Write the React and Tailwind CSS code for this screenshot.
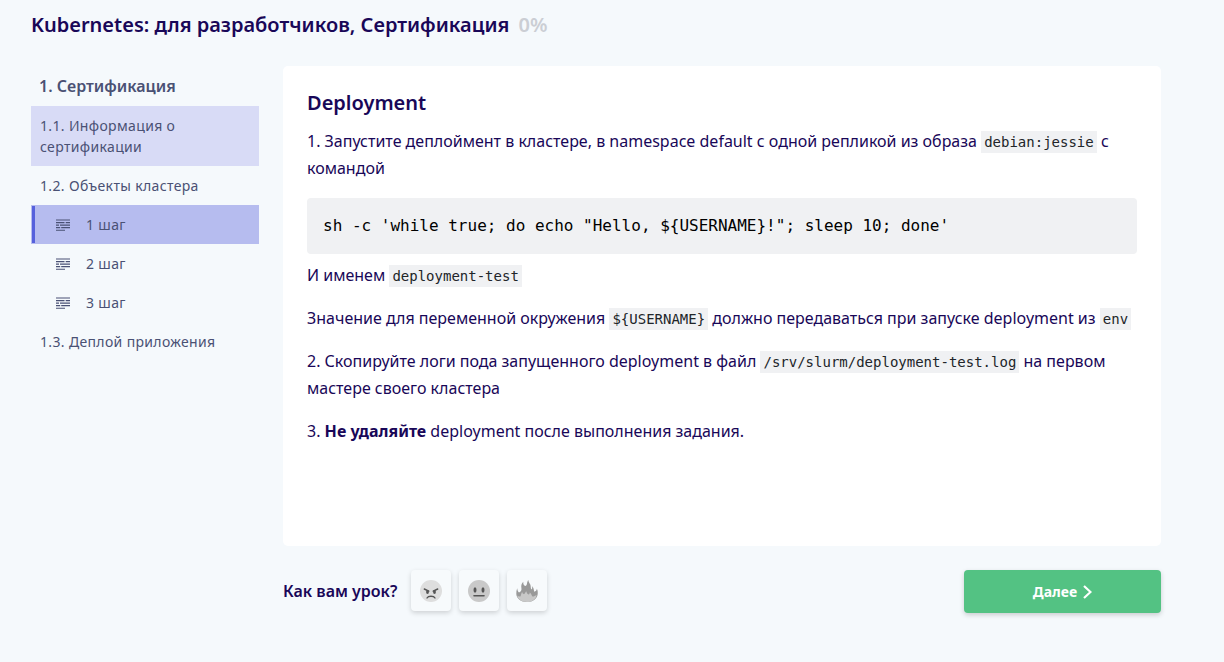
const steps = ["1 шаг", "2 шаг", "3 шаг"];

function Code({ children }) {
  return (
    <code className="bg-[#f0f1f3] px-[3px] py-[3px] font-['DejaVu_Sans_Mono',monospace] text-[14px] leading-none text-[#212529]">
      {children}
    </code>
  );
}

function StepIcon() {
  return (
    <svg className="h-3 w-[14px] shrink-0" viewBox="0 0 14 12" fill="none" stroke="currentColor" strokeWidth="1.1" aria-hidden="true">
      <path d="M0 1h14M0 3.600h8.500M9.700 3.600h4.300M0 6.100h3M4 6.100h10M0 8.600h4.200M5.200 8.600h8.800M0 11.200h9" />
    </svg>
  );
}

function AngryFace() {
  return (
    <svg className="size-[22px]" viewBox="0 0 22 22" aria-hidden="true">
      <circle cx="11" cy="11" r="11" fill="#dedede" />
      <path d="M4.300 9l4.500 2.200M17.700 9l-4.500 2.200M7 18c1.200-2.300 6.800-2.300 8 0" fill="none" stroke="#555" strokeWidth="1.400" strokeLinecap="round" />
      <ellipse cx="7.500" cy="12" rx="1.400" ry="1.900" fill="#555" />
      <ellipse cx="14.500" cy="12" rx="1.400" ry="1.900" fill="#555" />
    </svg>
  );
}

function NeutralFace() {
  return (
    <svg className="size-[22px]" viewBox="0 0 22 22" aria-hidden="true">
      <circle cx="11" cy="11" r="11" fill="#c9c9c9" />
      <ellipse cx="7" cy="10" rx="1.500" ry="2.800" fill="#555" />
      <ellipse cx="15" cy="10" rx="1.500" ry="2.800" fill="#555" />
      <path d="M6 15.700h10" stroke="#555" strokeWidth="1.600" strokeLinecap="round" />
    </svg>
  );
}

function Fire() {
  return (
    <svg className="size-[22px]" viewBox="0 0 22 22" aria-hidden="true">
      <path
        d="M11 22C5 22 .6 18.500.3 14C.2 12 .5 10 1.200 8.200C1.400 10 1.900 11.500 3 12.400C5 11.600 5.800 10.200 5.400 8C5 5.800 5.300 3.600 7.300 1.800C7.100 4 7.600 5.600 9.600 6C11.600 5 10.500 2 12.400 0C12.300 1.800 13.500 3 14.300 4.600C15 6.200 14.500 8 15.300 9.400C16.600 8.800 16.400 7.400 15.900 6.200C17.300 7.100 17.800 9 18.200 11.800C19.900 11.200 20.600 10.200 20.900 8.700C21.700 10.300 21.900 12.300 21.700 14C21.200 18.500 17 22 11 22Z"
        fill="#999"
      />
      <path
        d="M11 22C6 22 2.100 19.600 1.200 15.600C2 16.400 3.200 16.800 4.400 16.500C5.400 15 5 13.500 6.200 12.100C6.400 13.200 7 14 8 14.200C9.300 13.600 9 12.400 10.300 11.300C10.700 12.700 11.200 14.200 12.600 14.500C13.600 14.200 13.500 13.500 13.800 12.500C15.500 13.500 15.300 15.300 16.500 16.500C17.700 16.600 19 15.800 20.600 15C20 19.300 16 22 11 22Z"
        fill="#c8c8c8"
      />
    </svg>
  );
}

const reactions = [
  { label: "Плохо", Icon: AngryFace },
  { label: "Нормально", Icon: NeutralFace },
  { label: "Отлично", Icon: Fire },
];

export default function App() {
  return (
    <div className="min-h-screen bg-[#f5f9fc] pt-[10px] pr-[63px] pb-12 pl-[31px] font-['Noto_Sans',sans-serif] text-[#190758]">
      <h1 className="text-[20px] leading-[30px] font-semibold">
        Kubernetes: для разработчиков, Сертификация <span className="ml-1 text-[#cbced4]">0%</span>
      </h1>

      <div className="mt-[26px] flex items-start gap-6">
        <nav className="w-[228px] shrink-0 text-[14px] leading-[21px] tracking-wide text-[#4a5174]">
          <h2 className="px-2 py-2 text-[16px] leading-6 font-semibold tracking-normal">1. Сертификация</h2>
          <a href="#info" className="block bg-[#d8dbf6] p-[9px]">
            <span className="block max-w-[170px]">1.1. Информация о сертификации</span>
          </a>
          <a href="#objects" className="block p-[9px]">1.2. Объекты кластера</a>
          {steps.map((step, i) => (
            <a
              key={step}
              href={`#step-${i + 1}`}
              className={
                i === 0
                  ? "flex items-center gap-4 border border-[#b6bcef] bg-[#b6bcef] py-2 pl-6 shadow-[inset_3px_0_0_#5661dc]"
                  : "flex items-center gap-4 py-[9px] pl-[25px]"
              }
            >
              <StepIcon />
              {step}
            </a>
          ))}
          <a href="#deploy" className="block p-[9px]">1.3. Деплой приложения</a>
        </nav>

        <main className="min-w-0 flex-1">
          <article className="min-h-[480px] rounded-[5px] bg-white p-6 text-[16px] leading-[27px]">
            <h2 className="mb-3 text-[20px] leading-[26px] font-semibold">Deployment</h2>
            <p className="mb-4">
              1. Запустите деплоймент в кластере, в namespace default с одной репликой из образа <Code>debian:jessie</Code> с командой
            </p>
            <pre className="mb-2 overflow-x-auto rounded-[4px] bg-[#f0f1f3] p-4 font-['DejaVu_Sans_Mono',monospace] text-[16px] leading-6 text-black">
              {"sh -c 'while true; do echo \"Hello, ${USERNAME}!\"; sleep 10; done'"}
            </pre>
            <p className="mb-4">
              И именем <Code>deployment-test</Code>
            </p>
            <p className="mb-4">
              Значение для переменной окружения <Code>{"${USERNAME}"}</Code> должно передаваться при запуске deployment из <Code>env</Code>
            </p>
            <p className="mb-4">
              2. Скопируйте логи пода запущенного deployment в файл <Code>/srv/slurm/deployment-test.log</Code> на первом мастере своего кластера
            </p>
            <p>
              3. <strong className="font-bold">Не удаляйте</strong> deployment после выполнения задания.
            </p>
          </article>

          <div className="mt-6 flex items-start justify-between">
            <div className="flex items-center gap-[14px]">
              <span className="text-[16px] leading-6 font-semibold">Как вам урок?</span>
              <div className="flex gap-2">
                {reactions.map(({ label, Icon }) => (
                  <button
                    key={label}
                    type="button"
                    aria-label={label}
                    className="flex h-[41px] w-10 items-center justify-center rounded-[4px] bg-[#f7fafc] shadow-[0_2px_5px_rgba(0,0,0,0.16)]"
                  >
                    <Icon />
                  </button>
                ))}
              </div>
            </div>
            <button
              type="button"
              className="flex h-[43px] w-[197px] items-center justify-center gap-[6px] rounded-[4px] bg-[#53c283] text-[14px] font-bold text-white shadow-[0_2px_5px_rgba(0,0,0,0.18)]"
            >
              Далее
              <svg className="h-[14px] w-[9px]" viewBox="0 0 9 14" fill="none" stroke="currentColor" strokeWidth="2.2" aria-hidden="true">
                <path d="M1 1l6.500 6L1 13" />
              </svg>
            </button>
          </div>
        </main>
      </div>
    </div>
  );
}
